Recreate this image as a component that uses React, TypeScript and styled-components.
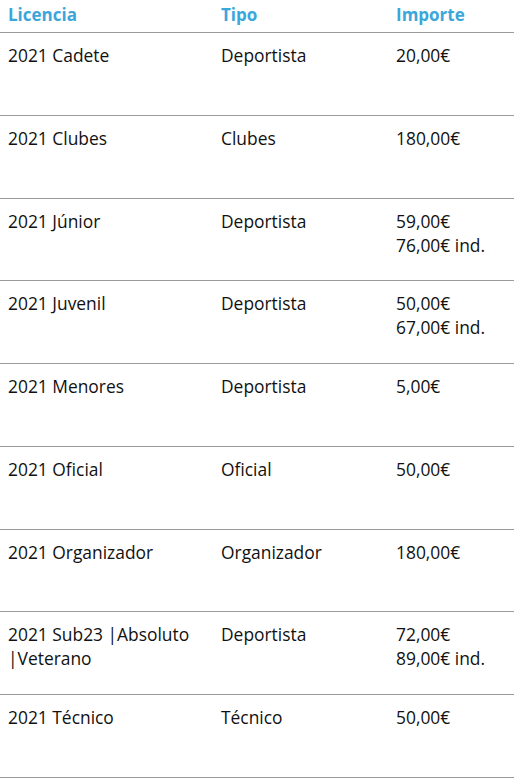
import React from 'react'
import styled, { createGlobalStyle } from 'styled-components'

type Licencia = {
	nombre: string[]
	tipo: string
	importe: string[]
}

const licencias: Licencia[] = [
	{ nombre: ['2021 Cadete'], tipo: 'Deportista', importe: ['20,00€'] },
	{ nombre: ['2021 Clubes'], tipo: 'Clubes', importe: ['180,00€'] },
	{ nombre: ['2021 Júnior'], tipo: 'Deportista', importe: ['59,00€', '76,00€ ind.'] },
	{ nombre: ['2021 Juvenil'], tipo: 'Deportista', importe: ['50,00€', '67,00€ ind.'] },
	{ nombre: ['2021 Menores'], tipo: 'Deportista', importe: ['5,00€'] },
	{ nombre: ['2021 Oficial'], tipo: 'Oficial', importe: ['50,00€'] },
	{ nombre: ['2021 Organizador'], tipo: 'Organizador', importe: ['180,00€'] },
	{ nombre: ['2021 Sub23 |Absoluto', '|Veterano'], tipo: 'Deportista', importe: ['72,00€', '89,00€ ind.'] },
	{ nombre: ['2021 Técnico'], tipo: 'Técnico', importe: ['50,00€'] },
]

const GlobalStyle = createGlobalStyle`
	body {
		margin: 0;
		background: #ffffff;
		font-family: 'Open Sans', 'Liberation Sans', sans-serif;
		color: #111111;
	}
`

const App: React.FC = () => {
	return (
		<>
			<GlobalStyle />
			<StyledTable>
				<StyledHeader>
					<StyledHeadCell>Licencia</StyledHeadCell>
					<StyledHeadCell>Tipo</StyledHeadCell>
					<StyledHeadCell>Importe</StyledHeadCell>
				</StyledHeader>
				{licencias.map((l) => (
					<StyledRow key={l.nombre.join('')}>
						<StyledCell>
							{l.nombre.map((n) => (
								<div key={n}>{n}</div>
							))}
						</StyledCell>
						<StyledCell>{l.tipo}</StyledCell>
						<StyledCell>
							{l.importe.map((i) => (
								<div key={i}>{i}</div>
							))}
						</StyledCell>
					</StyledRow>
				))}
			</StyledTable>
		</>
	)
}

const StyledTable = styled.div`
	display: flex;
	flex-direction: column;
	width: 100%;
`

const StyledHeader = styled.div`
	display: grid;
	grid-template-columns: 213px 175px 1fr;
	height: 33px;
	box-sizing: border-box;
	border-bottom: 1px solid #9a9a9a;
`

const StyledHeadCell = styled.div`
	padding: 2px 8px 0;
	color: #3ba6da;
	font-size: 17px;
	font-weight: 700;
	line-height: 26px;
`

const StyledRow = styled.div`
	display: grid;
	grid-template-columns: 213px 175px 1fr;
	height: 82.78px;
	box-sizing: border-box;
	border-bottom: 1px solid #9a9a9a;
`

const StyledCell = styled.div`
	padding: 10px 8px 0;
	font-size: 17.4px;
	line-height: 24px;
`

export default App
